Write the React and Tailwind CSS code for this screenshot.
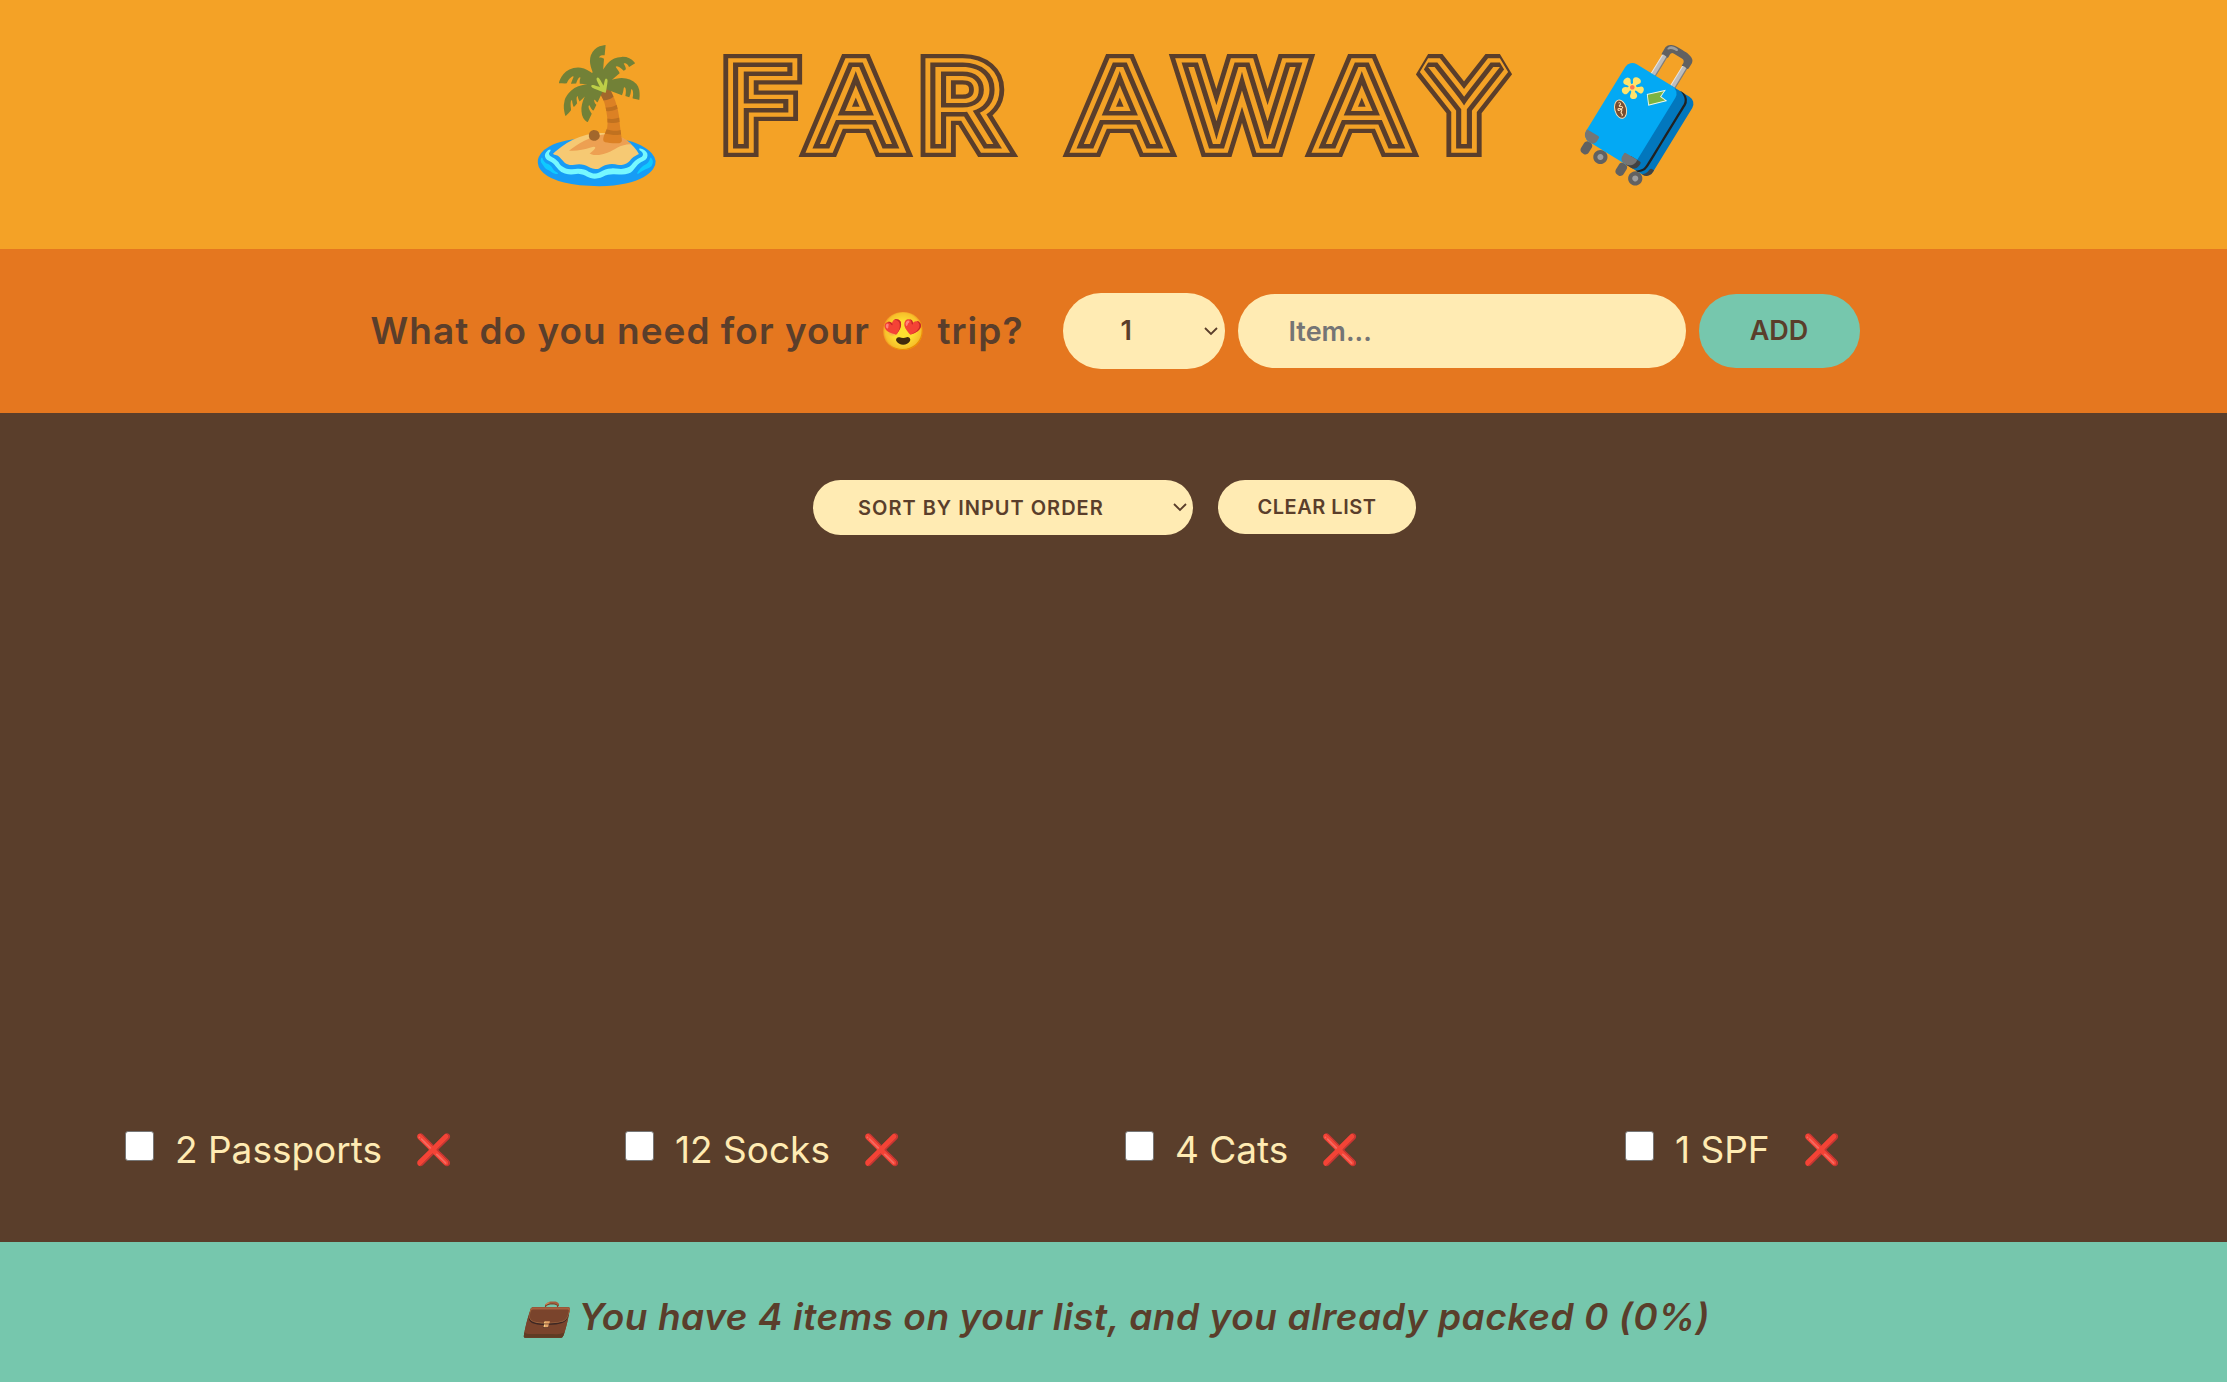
const items = [
  { id: 1, label: "2 Passports" },
  { id: 2, label: "12 Socks" },
  { id: 3, label: "4 Cats" },
  { id: 4, label: "1 SPF" },
];

// nested strokes on one thin text, widest first, give the inline-striped title
const titleStripes = [
  { width: 26, color: "#5a3e2b" },
  { width: 17.5, color: "#f4a226" },
  { width: 9, color: "#5a3e2b" },
  { width: 0, color: "#f4a226" },
];

function Chevron({ className }) {
  return (
    <svg viewBox="0 0 14 9" fill="none" stroke="#5a3e2b" strokeWidth="1.8" className={className}>
      <path d="M1 1l6 6 6-6" />
    </svg>
  );
}

function Logo() {
  return (
    <header className="flex items-center justify-center h-[249px] pl-[10px] pb-[24px] bg-[#f4a226] leading-none">
      <span className="text-[128px] mr-[41px]">🏝️</span>
      <h1 className="w-[800px] h-[140px]">
        <svg viewBox="0 0 800 140" className="w-[800px] h-[140px] overflow-visible">
          <defs>
            <text
              id="far-away"
              x="38.5 121.9 213.5 298.2 353.5 460.5 565.8 655.3"
              y="101"
              transform="scale(1.14 1)"
              textAnchor="middle"
              fontFamily="Inter"
              fontSize="106"
              fontWeight="200"
              strokeLinejoin="miter"
              strokeMiterlimit="2"
            >
              FAR AWAY
            </text>
          </defs>
          {titleStripes.map((s) => (
            <use
              key={s.width}
              href="#far-away"
              fill={s.color}
              stroke={s.width ? s.color : "none"}
              strokeWidth={s.width}
            />
          ))}
        </svg>
      </h1>
      <span className="text-[128px] ml-[45px]">🧳</span>
    </header>
  );
}

export default function App() {
  return (
    <div className="h-[1382px] grid grid-rows-[249px_164px_1fr_140px] font-['Inter'] text-[#5a3e2b] overflow-hidden">
      <Logo />

      {/* Add form */}
      <form className="flex items-center justify-center pl-[3px] bg-[#e5771f]">
        <h3 className="text-[37px] font-semibold tracking-[1px] mr-[39px]">What do you need for your 😍 trip?</h3>
        <div className="relative mr-[13px]">
          <select className="block appearance-none w-[162px] h-[76px] rounded-full bg-[#ffebb3] pl-[58px] text-[27px] font-semibold">
            <option>1</option>
            <option>2</option>
          </select>
          <Chevron className="absolute right-[7px] top-[34px] w-[14px] h-[9px]" />
        </div>
        <input
          placeholder="Item..."
          className="w-[448px] h-[74px] rounded-full bg-[#ffebb3] px-[51px] text-[27px] font-semibold placeholder:text-[#757575]"
        />
        <button type="button" className="w-[161px] h-[74px] ml-[13px] rounded-full bg-[#76c7ad] text-[27px] font-semibold">
          ADD
        </button>
      </form>

      {/* Packing list */}
      <main className="flex flex-col justify-between bg-[#5a3e2b] pt-[67px] pb-[65px]">
        <div className="flex justify-center gap-[25px] pl-[2px]">
          <div className="relative">
            <select className="block appearance-none w-[380px] h-[55px] rounded-full bg-[#ffebb3] pl-[45px] text-[20px] font-semibold tracking-[1px] uppercase">
              <option>Sort by input order</option>
              <option>Sort by description</option>
              <option>Sort by packed status</option>
            </select>
            <Chevron className="absolute right-[6px] top-[23px] w-[14px] h-[9px]" />
          </div>
          <button type="button" className="w-[198px] h-[54px] rounded-full bg-[#ffebb3] text-[20px] font-semibold tracking-[0.5px] uppercase">
            Clear list
          </button>
        </div>
        <ul className="grid grid-cols-[repeat(4,500px)] pl-[125px]">
          {items.map((item) => (
            <li key={item.id} className="flex items-center text-[#ffebb3] text-[37px]">
              <input
                type="checkbox"
                className="appearance-none w-[29px] h-[30px] mr-[21px] mb-[6px] bg-white border-[1.5px] border-[#767676] rounded-[3px]"
              />
              <span>{item.label}</span>
              <span className="ml-[33px] text-[30px]">❌</span>
            </li>
          ))}
        </ul>
      </main>

      <footer className="flex items-center justify-center pt-[10px] pl-[5px] bg-[#76c7ad] text-[37px] font-semibold italic tracking-[0.56px]">
        💼 You have 4 items on your list, and you already packed 0 (0%)
      </footer>
    </div>
  );
}
